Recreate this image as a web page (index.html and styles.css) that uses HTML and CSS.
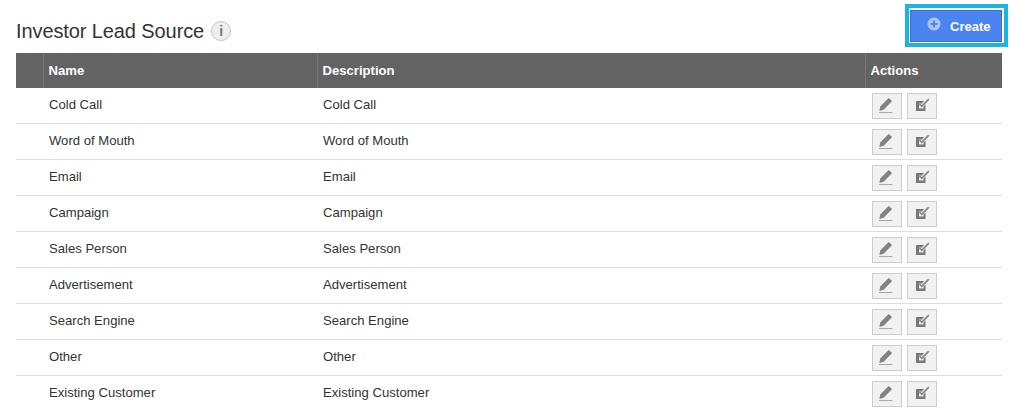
FILE: index.html
```html
<!DOCTYPE html>
<html lang="en">
<head>
    <meta charset="UTF-8">
    <title>Investor Lead Source</title>
    <link rel="stylesheet" href="styles.css">
</head>
<body>
    <svg class="icon-defs" width="0" height="0">
        <symbol id="icon-edit" viewBox="0 0 16 16">
            <path d="M9.6 0 13.2 3 4.6 11.8 0.4 13 1.2 8.6Z" fill="#828282"/>
            <path d="M0 14.5H13.5" stroke="#a8a8a8" stroke-width="1"/>
        </symbol>
        <symbol id="icon-review" viewBox="0 0 16 16">
            <path d="M2 3H10L8 5.5H5V10.5H9.5V8.5L11.5 6.5V13H2Z" fill="#777"/>
            <path d="M5.5 6 7.8 8.4 14.8 1.2" fill="none" stroke="#858585" stroke-width="1.7"/>
        </symbol>
    </svg>

    <div class="page-header">
        <h1 class="page-title">
            Investor Lead Source
            <span class="info-icon">i</span>
        </h1>
        <div class="create-focus">
            <button class="create-button">
                <svg class="create-plus" viewBox="0 0 14 14" width="14" height="14">
                    <circle cx="7" cy="7" r="6.5" fill="#a9c4f5"/>
                    <path d="M7 3.5V10.5M3.5 7H10.5" stroke="#4b84f0" stroke-width="2"/>
                </svg>
                Create
            </button>
        </div>
    </div>

    <table class="lead-table">
        <thead>
            <tr>
                <th class="col-check"></th>
                <th class="col-name">Name</th>
                <th class="col-desc">Description</th>
                <th class="col-actions">Actions</th>
            </tr>
        </thead>
        <tbody id="rows"></tbody>
    </table>

    <script>
        const sources = ['Cold Call', 'Word of Mouth', 'Email', 'Campaign', 'Sales Person',
            'Advertisement', 'Search Engine', 'Other', 'Existing Customer'];
        const rows = document.getElementById('rows');

        sources.forEach(source => {
            const tr = document.createElement('tr');
            tr.innerHTML = `
                <td></td>
                <td class="cell-text">${source}</td>
                <td class="cell-text">${source}</td>
                <td>
                    <div class="row-actions">
                        <button class="icon-button"><svg width="16" height="16"><use href="#icon-edit"/></svg></button>
                        <button class="icon-button"><svg width="16" height="16"><use href="#icon-review"/></svg></button>
                    </div>
                </td>
            `;
            rows.appendChild(tr);
        });
    </script>
</body>
</html>
```

FILE: styles.css
```css
html, body {
    height: 411px;
    overflow: hidden;
}

body {
    margin: 0;
    padding: 0 17px 0 16px;
    font-family: "Liberation Sans", Arial, sans-serif;
    background-color: #fff;
    color: #333;
}

.icon-defs {
    display: block;
}

.page-header {
    display: flex;
    justify-content: space-between;
    align-items: flex-start;
    height: 53px;
}

.page-title {
    display: flex;
    align-items: center;
    gap: 7px;
    margin: 18px 0 0 0;
    font-size: 20px;
    font-weight: 400;
    letter-spacing: -0.1px;
    line-height: 26px;
    color: #333;
}

.info-icon {
    display: flex;
    align-items: center;
    justify-content: center;
    width: 18px;
    height: 18px;
    border: 1px solid #c4c4c4;
    border-radius: 50%;
    background-color: #eee;
    color: #777;
    font-size: 14px;
    font-weight: 700;
}

.create-focus {
    margin: 4px -6px 0 0;
    padding: 2px 2px 1px 1px;
    border: 4px solid #1cb4e4;
    background-color: #fff;
}

.create-button {
    display: flex;
    align-items: center;
    gap: 9px;
    width: 92px;
    height: 32px;
    padding: 0 0 0 16px;
    border: 1px solid #3d6fd0;
    background-color: #4b84f0;
    color: #fff;
    font-family: inherit;
    font-size: 13px;
    font-weight: 700;
    cursor: pointer;
}

.create-plus {
    margin-top: -4px;
}

.lead-table {
    width: 986px;
    border-collapse: collapse;
    table-layout: fixed;
    font-size: 13.1px;
}

.lead-table th {
    box-sizing: border-box;
    height: 35px;
    padding: 0 5px;
    background-color: #636363;
    border-left: 1px solid #777;
    color: #fff;
    font-weight: 700;
    text-align: left;
}

.lead-table th:first-child {
    border-left: none;
}

.col-check {
    width: 27px;
}

.col-name {
    width: 274px;
}

.col-desc {
    width: 548px;
}

.lead-table td {
    height: 33px;
    padding: 0 5px 2px;
    border-bottom: 1px solid #ddd;
}

.lead-table .cell-text {
    padding-left: 6px;
}

.row-actions {
    display: flex;
    gap: 5px;
    margin: 2px 0 0 2px;
}

.icon-button {
    display: flex;
    align-items: center;
    justify-content: center;
    width: 30px;
    height: 26px;
    padding: 0;
    border: 1px solid #ccc;
    background-color: #f1f1f1;
}
```
